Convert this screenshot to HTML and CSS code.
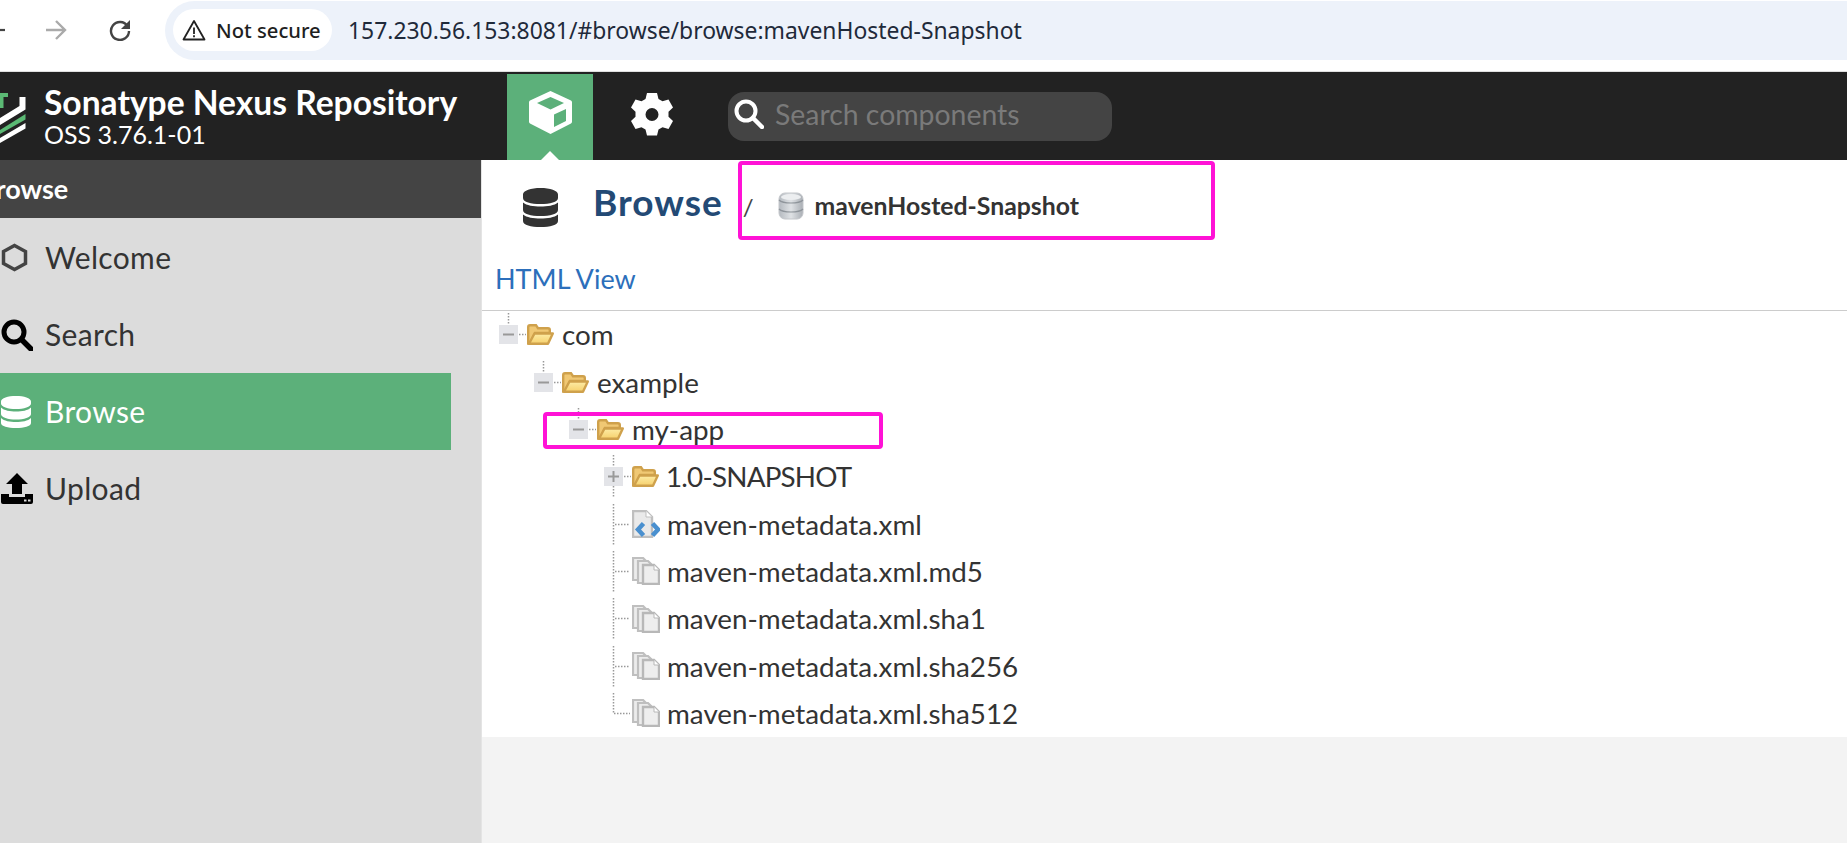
FILE: index.html
```html
<!DOCTYPE html>
<html lang="en">
<head>
  <meta charset="UTF-8" />
  <title>Nexus Repository - Browse</title>
  <link rel="stylesheet" href="styles.css">
</head>
<body>

<svg class="defs" width="0" height="0">
  <defs>
    <linearGradient id="folderFront" x1="0" y1="0" x2="0" y2="1">
      <stop offset="0" stop-color="#fdeca6"/>
      <stop offset="1" stop-color="#f6d06c"/>
    </linearGradient>
    <linearGradient id="dbGray" x1="0" y1="0" x2="1" y2="0">
      <stop offset="0" stop-color="#b4b9bf"/>
      <stop offset="0.5" stop-color="#dfe2e5"/>
      <stop offset="1" stop-color="#a9aeb4"/>
    </linearGradient>
    <symbol id="folder" viewBox="0 0 27 21">
      <path d="M1.200 19.500V3q0-1.800 1.800-1.800h6l2 3h10q1.800 0 1.800 1.800v3H8L3 19.500z" fill="#f0c874" stroke="#cfa14c" stroke-width="2.400"/>
      <path d="M2 19.800 7.500 9.500H25.800l-4.800 10.300z" fill="url(#folderFront)" stroke="#cfa14c" stroke-width="2.400" stroke-linejoin="round"/>
    </symbol>
    <symbol id="sheets" viewBox="0 0 28 28">
      <path d="M1 1h10l3 3v19H1z" fill="#ececec" stroke="#bfbfbf" stroke-width="2.200"/>
      <path d="M6 4h10l3 3v19H6z" fill="#ececec" stroke="#bfbfbf" stroke-width="2.200"/>
      <path d="M11 8h11l5 5v14H11z" fill="#eeeeee" stroke="#b8b8b8" stroke-width="2.400"/>
      <path d="M22 8v5h5" fill="#fff" stroke="#b8b8b8"/>
    </symbol>
    <symbol id="xmlfile" viewBox="0 0 28 28">
      <path d="M1 1h13l6 6v20H1z" fill="#eaeaea" stroke="#bfbfbf" stroke-width="2.400"/>
      <path d="M14 1v6h6" fill="#fff" stroke="#bfbfbf"/>
      <path d="M11.500 13.500 6 19.500l5.500 6M20.500 13.500l5.500 6-5.500 6" fill="none" stroke="#4a90cf" stroke-width="4.500"/>
    </symbol>
    <symbol id="opened" viewBox="0 0 28 47">
      <path d="M9.500 2v12M20 23.500h7" stroke="#999" stroke-width="1.500" stroke-dasharray="1.500 1.500"/>
      <rect y="14" width="19" height="19" fill="#e3e4e8"/>
      <path d="M4 23.500h11" stroke="#999" stroke-width="2"/>
    </symbol>
    <symbol id="closed" viewBox="0 0 28 47">
      <path d="M9.500 2v12M9.500 33v12M20 23.500h7" stroke="#999" stroke-width="1.500" stroke-dasharray="1.500 1.500"/>
      <rect y="14" width="19" height="19" fill="#e3e4e8"/>
      <path d="M4 23.500h11M9.500 18v11" stroke="#999" stroke-width="2"/>
    </symbol>
    <symbol id="branch" viewBox="0 0 28 47">
      <path d="M9.500 3v41M11 23.500h15" stroke="#999" stroke-width="1.500" stroke-dasharray="1.500 1.500"/>
    </symbol>
    <symbol id="lastbranch" viewBox="0 0 28 47">
      <path d="M9.500 3v20.500H26" fill="none" stroke="#999" stroke-width="1.500" stroke-dasharray="1.500 1.500"/>
    </symbol>
  </defs>
</svg>

<div class="browserbar">
  <svg class="back" width="5" height="4" viewBox="0 0 5 4"><path d="M0 2h5" stroke="#444" stroke-width="2.200"/></svg>
  <svg class="forward" width="22" height="22" viewBox="0 0 22 22"><path d="M1 11h19M11 2l9 9-9 9" fill="none" stroke="#aaa" stroke-width="2.400"/></svg>
  <svg class="reload" width="22" height="22" viewBox="0 0 22 22"><path d="M18.500 7A9 9 0 1 0 20 12" fill="none" stroke="#444" stroke-width="2.400"/><path d="M21 1v9h-9z" fill="#444"/></svg>
  <div class="urlpill">
    <div class="chip">
      <svg width="24" height="22" viewBox="0 0 24 22"><path d="M12 2 1.500 20.500h21z" fill="none" stroke="#222" stroke-width="1.800" stroke-linejoin="round"/><path d="M12 8.500v6.500M12 16.300v2" stroke="#222" stroke-width="1.800"/></svg>
      <span>Not secure</span>
    </div>
    <div class="url">157.230.56.153:8081/#browse/browse:mavenHosted-Snapshot</div>
  </div>
</div>

<header class="appbar">
  <svg class="logo" width="26" height="56" viewBox="0 90 26 56">
    <path d="M0 93h8v4H3.500v11H0z" fill="#5bb974"/>
    <path d="M0 118 19.500 106V97h6v12.500L0 125z" fill="#fff"/>
    <path d="M0 130 25.500 114v5.500L0 134z" fill="#5bb974"/>
    <path d="M0 138 25.500 123v5.500L0 143z" fill="#fff"/>
  </svg>
  <div class="brand">
    <div class="brand-name">Sonatype Nexus Repository</div>
    <div class="brand-version">OSS 3.76.1-01</div>
  </div>
  <div class="tab-active">
    <svg width="43" height="43" viewBox="0 0 43 43">
      <path d="M21.500 0 42 9.500q1 .5 1 2v19q0 1.500-1 2L21.500 43 1 32.500q-1-.5-1-2v-19q0-1.500 1-2z" fill="#fff"/>
      <path d="M21.500 6 35 12l-13.500 6.500L8 12z" fill="#5cb07a"/>
      <path d="M25 23.500 37 18v12l-12 6z" fill="#5cb07a"/>
    </svg>
    <span class="tab-caret"></span>
  </div>
  <div class="gear">
    <svg width="42" height="43" viewBox="0 0 42 43">
      <path fill-rule="evenodd" fill="#fff" d="M16 0h10l1.500 6 4 2.300 6-1.800 4.500 8-4.500 4.300v5l4.500 4.200-4.500 8-6-1.800-4 2.300-1.500 6H16l-1.500-6-4-2.300-6 1.800-4.500-8 4.500-4.200v-5L0 14.500l4.500-8 6 1.800 4-2.300zM21 15a6.500 6.500 0 1 0 0 13 6.500 6.500 0 0 0 0-13z"/>
    </svg>
  </div>
  <div class="searchbox">
    <svg width="30" height="30" viewBox="0 0 30 30"><circle cx="12" cy="12" r="9.500" fill="none" stroke="#fff" stroke-width="4"/><path d="M19 19l9 9" stroke="#fff" stroke-width="4.500" stroke-linecap="round"/></svg>
    <span>Search components</span>
  </div>
</header>

<div class="layout">
  <aside class="sidebar">
    <div class="sidebar-title">Browse</div>
    <nav class="nav">
      <a class="nav-item">
        <span class="nav-icon"><svg width="27" height="29" viewBox="0 0 27 29"><path d="M13.500 2.500 24.500 8.500v12l-11 6-11-6v-12z" fill="none" stroke="#444" stroke-width="3.500"/></svg></span>
        Welcome
      </a>
      <a class="nav-item">
        <span class="nav-icon"><svg width="32" height="32" viewBox="0 0 32 32"><circle cx="13" cy="13" r="10" fill="none" stroke="#000" stroke-width="5"/><path d="M21 21l9 9" stroke="#000" stroke-width="5.500" stroke-linecap="round"/></svg></span>
        Search
      </a>
      <a class="nav-item active">
        <span class="nav-icon"><svg width="30" height="32" viewBox="0 0 30 32"><path fill="#fff" d="M15 0c8 0 15 2 15 5.500v2C30 11 23 13 15 13S0 11 0 7.500v-2C0 2 7 0 15 0zM0 11.500C3 14.500 9 15.500 15 15.500s12-1 15-4V18c0 3.500-7 5.500-15 5.500S0 21.500 0 18zM0 22c3 3 9 4 15 4s12-1 15-4v5c0 3.500-7 5-15 5S0 30.500 0 27z"/></svg></span>
        Browse
      </a>
      <a class="nav-item">
        <span class="nav-icon"><svg width="32" height="31" viewBox="0 0 32 31"><path d="M16 0 27 11h-6v10h-10V11H5z" fill="#000"/><path fill-rule="evenodd" fill="#000" d="M0 21h8v3h16v-3h8v8q0 2-2 2H2q-2 0-2-2zM23 26.500h2.500v2H23zM27 26.500h2.500v2H27z"/></svg></span>
        Upload
      </a>
    </nav>
  </aside>

  <main class="content">
    <div class="panel">
      <div class="crumbs">
        <svg class="crumb-db" width="35" height="39" viewBox="0 0 35 39"><path fill="#333" d="M17.500 0C27 0 35 2.500 35 6.500V10c0 4-8 6-17.500 6S0 14 0 10V6.500C0 2.500 8 0 17.500 0zM0 14.500c3.500 3 10.500 4 17.500 4s14-1 17.500-4V22c0 4-8 6-17.500 6S0 26 0 22zM0 26.500c3.500 3 10.500 4 17.500 4s14-1 17.500-4V33c0 4-8 6-17.500 6S0 37 0 33z"/></svg>
        <h1 class="crumb-title">Browse</h1>
        <span class="crumb-sep">/</span>
        <svg class="crumb-small" width="26" height="28" viewBox="0 0 26 28"><rect x="1" y="1" width="24" height="26" rx="6" fill="url(#dbGray)" stroke="#c4c7cb"/><path d="M1 8c4 4 20 4 24 0M1 17c4 4 20 4 24 0" fill="none" stroke="#8f959b" stroke-width="1.200"/><ellipse cx="13" cy="5" rx="10" ry="3" fill="#eceef0"/></svg>
        <span class="crumb-name">mavenHosted-Snapshot</span>
      </div>
      <a class="html-view">HTML View</a>
      <ul class="tree">
        <li class="tree-row lvl-0"><svg class="conn"><use href="#opened"/></svg><svg class="ticon"><use href="#folder"/></svg><span class="tname">com</span></li>
        <li class="tree-row lvl-1"><svg class="conn"><use href="#opened"/></svg><svg class="ticon"><use href="#folder"/></svg><span class="tname">example</span></li>
        <li class="tree-row lvl-2"><svg class="conn"><use href="#opened"/></svg><svg class="ticon"><use href="#folder"/></svg><span class="tname">my-app</span></li>
        <li class="tree-row lvl-3"><svg class="conn"><use href="#closed"/></svg><svg class="ticon"><use href="#folder"/></svg><span class="tname caps">1.0-SNAPSHOT</span></li>
        <li class="tree-row lvl-3"><svg class="conn"><use href="#branch"/></svg><svg class="ticon file"><use href="#xmlfile"/></svg><span class="tname">maven-metadata.xml</span></li>
        <li class="tree-row lvl-3"><svg class="conn"><use href="#branch"/></svg><svg class="ticon file"><use href="#sheets"/></svg><span class="tname">maven-metadata.xml.md5</span></li>
        <li class="tree-row lvl-3"><svg class="conn"><use href="#branch"/></svg><svg class="ticon file"><use href="#sheets"/></svg><span class="tname">maven-metadata.xml.sha1</span></li>
        <li class="tree-row lvl-3"><svg class="conn"><use href="#branch"/></svg><svg class="ticon file"><use href="#sheets"/></svg><span class="tname">maven-metadata.xml.sha256</span></li>
        <li class="tree-row lvl-3"><svg class="conn"><use href="#lastbranch"/></svg><svg class="ticon file"><use href="#sheets"/></svg><span class="tname">maven-metadata.xml.sha512</span></li>
      </ul>
    </div>
  </main>
</div>

<!-- annotation boxes drawn over the screenshot -->
<div class="mark mark-crumb"></div>
<div class="mark mark-row"></div>

</body>
</html>
```

FILE: styles.css
```css
html, body { margin: 0; padding: 0; height: 100%; }
body { position: relative; width: 1847px; height: 843px; overflow: hidden; background: #f3f3f3; font-family: Lato, "Open Sans", sans-serif; color: #333; }
.defs { display: block; height: 0; }
svg { display: block; flex: none; }

/* browser toolbar */
.browserbar { height: 71px; border-bottom: 1px solid #dfdfdf; background: #fff; display: flex; align-items: center; box-sizing: content-box; }
.back { margin-top: -11px; }
.forward { margin-left: 40px; margin-top: -11px; }
.reload { margin-left: 42px; margin-top: -11px; }
.urlpill { margin-left: 34px; margin-top: -11px; flex: 1; height: 59px; background: #edf2fa; border-radius: 30px 0 0 30px; display: flex; align-items: center; padding-left: 8px; }
.chip { width: 159px; height: 42px; box-sizing: border-box; background: #fff; border-radius: 21px; display: flex; align-items: center; gap: 10px; padding-left: 9px; font-family: "Noto Sans", sans-serif; font-size: 20.2px; font-weight: 500; color: #1f1f1f; white-space: nowrap; }
.url { margin-left: 16px; font-family: "Noto Sans", sans-serif; font-size: 22.9px; color: #1f2a3a; white-space: nowrap; }

/* app header */
.appbar { height: 88px; background: #222; display: flex; align-items: flex-start; }
.logo { margin-top: 18px; }
.brand { margin-left: 18px; width: 463px; color: #fff; padding-top: 11px; }
.brand-name { font-size: 33.6px; font-weight: 700; line-height: 38px; white-space: nowrap; }
.brand-version { font-size: 25px; line-height: 26px; }
.tab-active { width: 86px; height: 86px; margin-top: 2px; background: #5cb07a; display: flex; flex-direction: column; align-items: center; padding-top: 17px; box-sizing: border-box; }
.tab-caret { margin-top: 17px; border-left: 9px solid transparent; border-right: 9px solid transparent; border-bottom: 9px solid #fff; }
.gear { margin-left: 38px; margin-top: 21px; }
.searchbox { margin-left: 55px; margin-top: 20px; width: 384px; height: 49px; box-sizing: border-box; background: #444; border-radius: 16px; display: flex; align-items: center; padding: 0 0 6px 6px; gap: 11px; font-size: 28.4px; color: #7a7a7a; }

/* left nav */
.layout { display: flex; height: 683px; }
.sidebar { width: 481px; flex: none; background: #dcdcdc; }
.sidebar-title { height: 58px; background: #444; color: #fff; font-size: 27px; font-weight: 700; line-height: 58px; margin-bottom: 1px; text-indent: -22px; overflow: hidden; }
.nav { display: flex; flex-direction: column; }
.nav-item { width: 451px; height: 77px; box-sizing: border-box; padding-bottom: 2px; display: flex; align-items: center; font-size: 30px; letter-spacing: .35px; color: #333; }
.nav-item.active { background: #5cb07a; color: #fff; }
.nav-icon { width: 45px; display: flex; padding-left: 1px; margin-top: 2px; box-sizing: border-box; }

/* main panel */
.content { flex: 1; border-left: 1px solid #e4e4e4; }
.panel { background: #fff; height: 577px; }
.crumbs { height: 90px; display: flex; align-items: center; padding-left: 41px; box-sizing: border-box; }
.crumb-db { margin-top: 5px; }
.crumb-title { margin: 0 0 7px 35px; font-size: 37px; letter-spacing: 1px; font-weight: 700; color: #234a75; }
.crumb-sep { margin-left: 20px; margin-top: 2px; font-size: 24px; color: #444; }
.crumb-small { margin-left: 24px; margin-top: 1px; }
.crumb-name { margin-left: 11px; font-size: 24.8px; font-weight: 700; color: #333; }
.html-view { display: block; height: 61px; padding-left: 13px; box-sizing: border-box; font-size: 27px; line-height: 57px; color: #2c6fbb; border-bottom: 1px solid #ccc; }

/* repository tree */
.tree { margin: 0; padding: 0; list-style: none; }
.tree-row { height: 47.35px; display: flex; align-items: center; font-size: 27.8px; color: #333; }
.lvl-0 { padding-left: 17px; }
.lvl-1 { padding-left: 52px; }
.lvl-2 { padding-left: 87px; }
.lvl-3 { padding-left: 122px; }
.conn { width: 28px; height: 47px; }
.ticon { width: 27px; height: 21px; }
.ticon.file { width: 28px; height: 28px; }
.tname { margin-left: 8px; white-space: nowrap; }
.ticon.file + .tname, .tname.caps { margin-left: 7px; }
.tname.caps { letter-spacing: -.8px; }

/* magenta annotations */
.mark { position: absolute; border: 4px solid #ff12d6; border-radius: 4px; box-sizing: border-box; }
.mark-crumb { left: 738px; top: 161px; width: 477px; height: 79px; }
.mark-row { left: 543px; top: 412px; width: 340px; height: 37px; }
```
